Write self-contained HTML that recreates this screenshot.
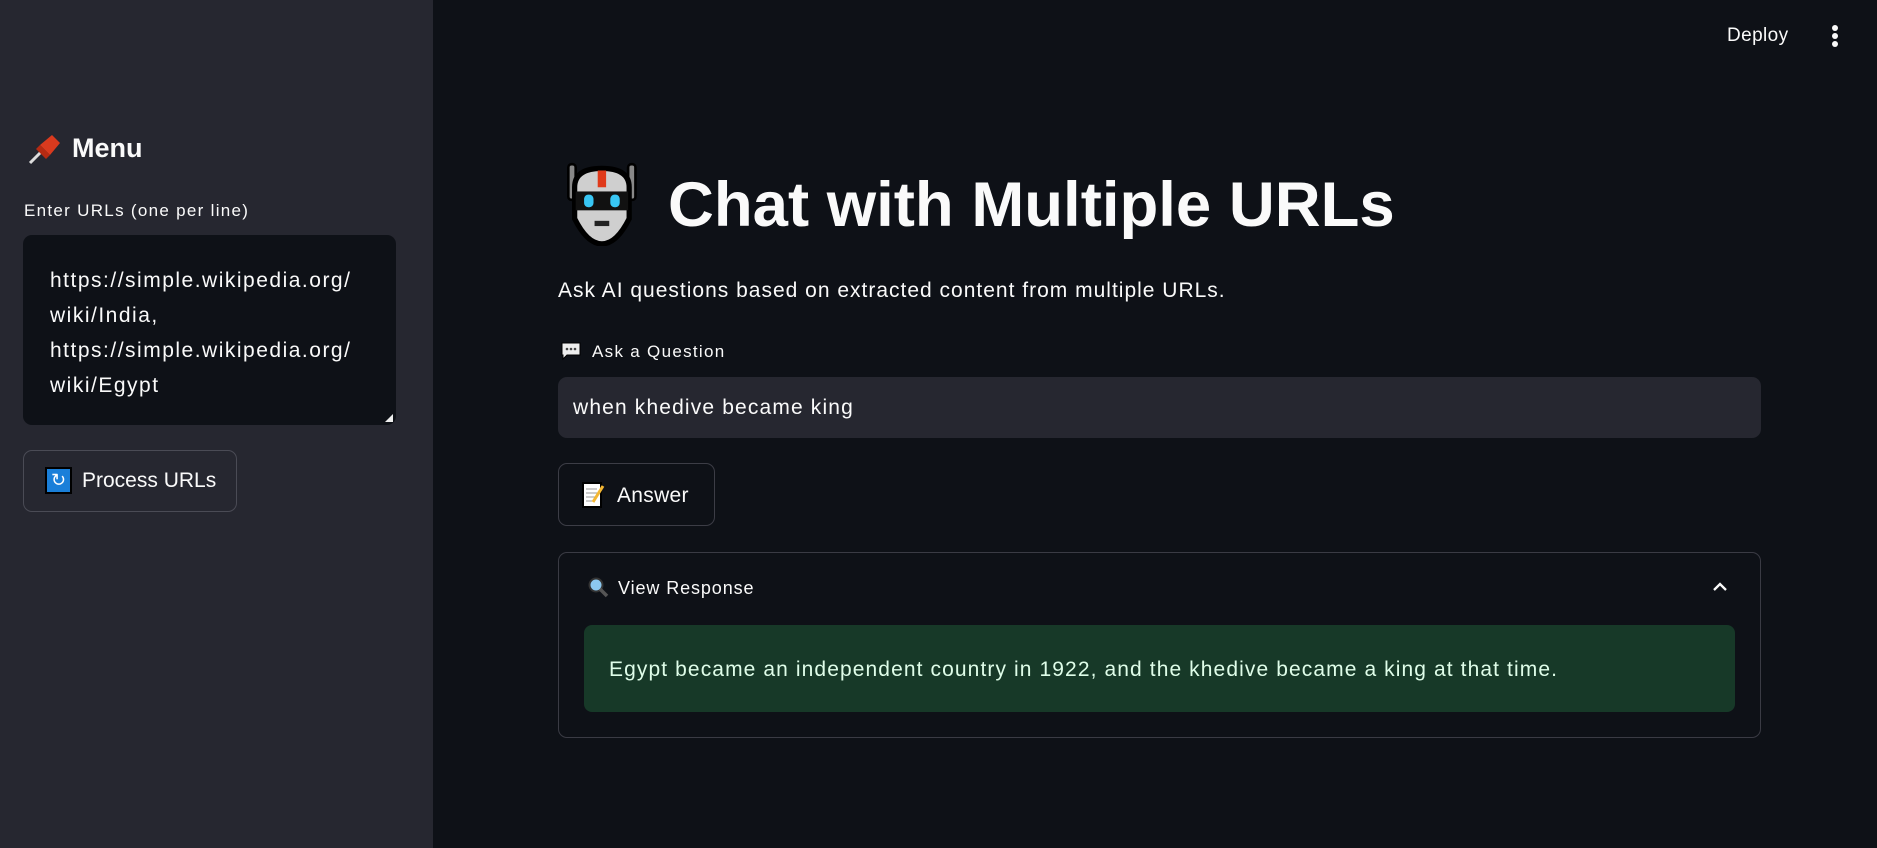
<!DOCTYPE html>
<html><head><meta charset="utf-8"><style>
*{margin:0;padding:0;box-sizing:border-box}
body{width:1877px;height:848px;background:#0e1117;font-family:"Liberation Sans",sans-serif;color:#fafafa;position:relative;overflow:hidden}
.a{position:absolute;white-space:nowrap}
#side{position:absolute;left:0;top:0;width:433px;height:848px;background:#262730}
</style></head><body>
<div id="side"></div>
<div class="a" style="left:1727px;top:25px;font-size:19px;letter-spacing:0.4px">Deploy</div>
<div class="a" style="left:1832px;top:25px;width:6px">
<div style="width:6px;height:6px;border-radius:3px;background:#fafafa;margin-bottom:2px"></div>
<div style="width:6px;height:6px;border-radius:3px;background:#fafafa;margin-bottom:2px"></div>
<div style="width:6px;height:6px;border-radius:3px;background:#fafafa"></div></div>

<svg class="a" style="left:26px;top:131px" width="36" height="36" viewBox="0 0 36 36"><line x1="4" y1="32" x2="16" y2="20" stroke="#ddd" stroke-width="3"/><path d="M14 14 L26 4 L34 12 L24 24 Z" fill="#d93a1e"/><path d="M10 18 L20 28 L24 24 L14 14 Z" fill="#b52a12"/></svg>
<div class="a" style="left:72px;top:133px;font-size:27px;font-weight:bold">Menu</div>
<div class="a" style="left:24px;top:201px;font-size:17px;letter-spacing:1.3px">Enter URLs (one per line)</div>
<div class="a" style="left:23px;top:235px;width:373px;height:190px;background:#0e1117;border-radius:9px"></div>
<div class="a" style="left:50px;top:263px;font-size:21px;line-height:35px;letter-spacing:1.5px">https://simple.wikipedia.org/<br>wiki/India,<br>https://simple.wikipedia.org/<br>wiki/Egypt</div>
<div class="a" style="left:385px;top:414px;width:0;height:0;border-left:8px solid transparent;border-bottom:8px solid #eee"></div>
<div class="a" style="left:23px;top:450px;width:214px;height:62px;border:1px solid #4a4b55;border-radius:9px"></div>
<div class="a" style="left:45px;top:467px;width:27px;height:27px;background:#000;padding:2px"><div style="width:23px;height:23px;background:#1a7fd9;color:#fff;font-size:18px;text-align:center;line-height:23px">↻</div></div>
<div class="a" style="left:82px;top:469px;font-size:21px">Process URLs</div>

<svg class="a" style="left:562px;top:160px" width="84" height="86" viewBox="0 0 80 82"><rect x="6" y="4" width="7" height="34" rx="3" fill="#888" stroke="#000" stroke-width="2.5"/><rect x="63" y="4" width="7" height="34" rx="3" fill="#888" stroke="#000" stroke-width="2.5"/><path d="M12 26 Q12 8 38 8 Q64 8 64 26 L64 56 Q52 80 38 80 Q24 80 12 56 Z" fill="#cfcfcf" stroke="#000" stroke-width="5"/><rect x="34" y="10" width="8" height="16" fill="#e03a1a"/><rect x="13" y="30" width="50" height="18" fill="#111"/><rect x="21" y="33" width="9" height="12" rx="4" fill="#38c6f4"/><rect x="46" y="33" width="9" height="12" rx="4" fill="#38c6f4"/><rect x="31" y="58" width="14" height="5" fill="#222"/></svg>
<div class="a" style="left:668px;top:169px;font-size:63.5px;font-weight:bold">Chat with Multiple URLs</div>
<div class="a" style="left:558px;top:279px;font-size:21px;letter-spacing:1px">Ask AI questions based on extracted content from multiple URLs.</div>
<svg class="a" style="left:561px;top:341px" width="20" height="20" viewBox="0 0 20 20"><path d="M1 2 H19 V14 H6 L2 18 V14 H1 Z" fill="#eee" stroke="#000"/><circle cx="6" cy="8" r="1.3" fill="#444"/><circle cx="10" cy="8" r="1.3" fill="#444"/><circle cx="14" cy="8" r="1.3" fill="#444"/></svg>
<div class="a" style="left:592px;top:342px;font-size:17px;letter-spacing:1.3px">Ask a Question</div>
<div class="a" style="left:558px;top:377px;width:1203px;height:61px;background:#262730;border-radius:9px"></div>
<div class="a" style="left:573px;top:396px;font-size:21px;letter-spacing:1.15px">when khedive became king</div>
<div class="a" style="left:558px;top:463px;width:157px;height:63px;border:1px solid #3c3d46;border-radius:9px"></div>
<svg class="a" style="left:581px;top:482px" width="26" height="26" viewBox="0 0 26 26"><rect x="2" y="1" width="18" height="24" fill="#fff" stroke="#000" stroke-width="2"/><path d="M5 7H16M5 11H16M5 15H14M5 19H12" stroke="#999"/><path d="M22 4 L12 20" stroke="#f4b733" stroke-width="3"/></svg>
<div class="a" style="left:617px;top:484px;font-size:21px;letter-spacing:0.3px">Answer</div>
<div class="a" style="left:558px;top:552px;width:1203px;height:186px;border:1px solid #3a3b44;border-radius:9px"></div>
<svg class="a" style="left:587px;top:576px" width="22" height="22" viewBox="0 0 22 22"><circle cx="9" cy="9" r="6.5" fill="#8cc8ef" stroke="#333" stroke-width="2"/><line x1="13" y1="13" x2="20" y2="20" stroke="#555" stroke-width="3.5"/></svg>
<div class="a" style="left:618px;top:578px;font-size:18px;letter-spacing:0.9px">View Response</div>
<svg class="a" style="left:1710px;top:578px" width="20" height="16" viewBox="0 0 20 16"><path d="M4 12 L10 6 L16 12" fill="none" stroke="#fafafa" stroke-width="2.3"/></svg>
<div class="a" style="left:584px;top:625px;width:1151px;height:87px;background:#173928;border-radius:8px"></div>
<div class="a" style="left:609px;top:658px;font-size:21px;letter-spacing:1.1px;color:#dffde9">Egypt became an independent country in 1922, and the khedive became a king at that time.</div>
</body></html>
